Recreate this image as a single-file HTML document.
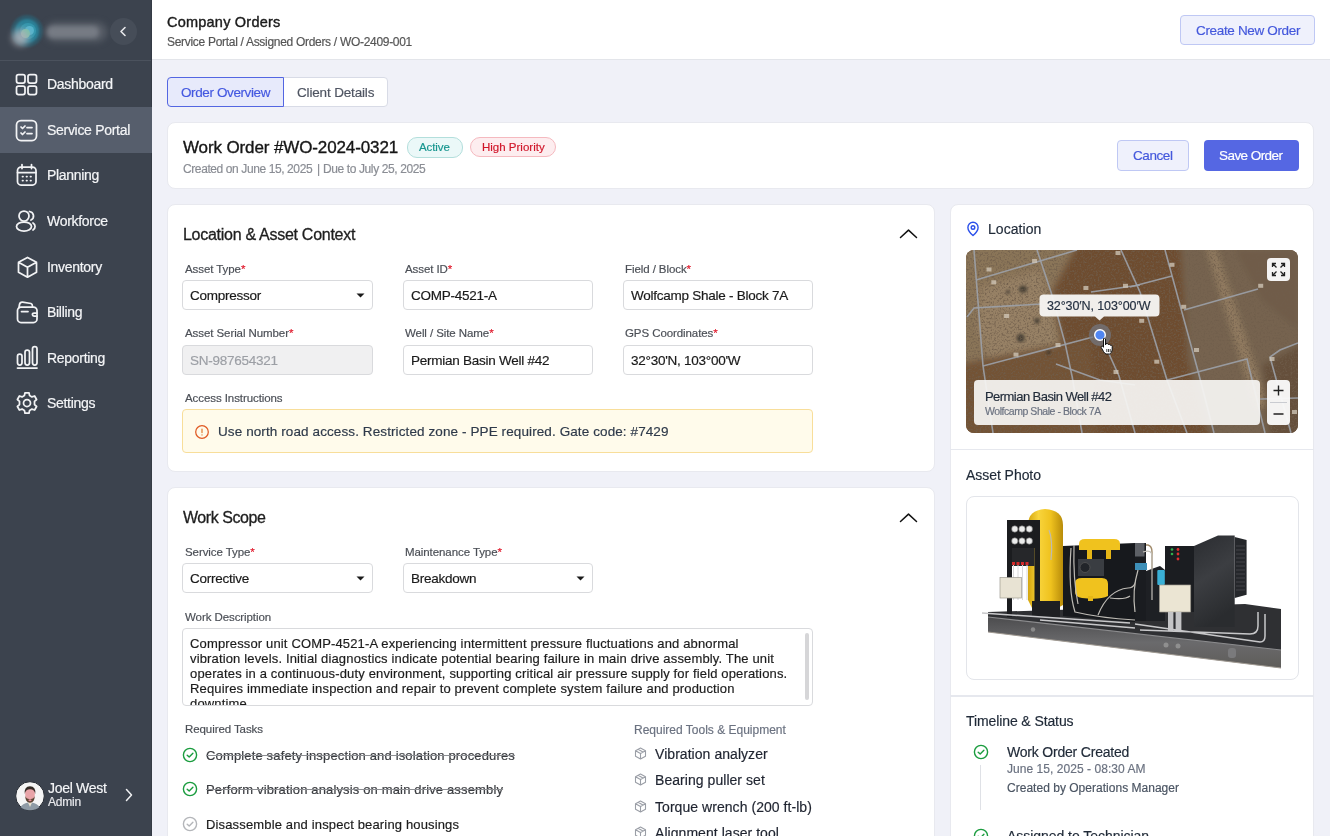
<!DOCTYPE html>
<html><head><meta charset="utf-8"><title>Company Orders</title>
<style>
html,body{margin:0;padding:0;}
body{width:1331px;height:836px;position:relative;overflow:hidden;background:#f0f1f8;font-family:"Liberation Sans", sans-serif;}
.t{position:absolute;white-space:nowrap;will-change:transform;-webkit-text-stroke:0.18px currentColor;}
.r{position:absolute;}
svg.r{overflow:visible;}
</style></head><body>
<div class="r" style="left:0px;top:0px;width:152px;height:836px;background:#3c434e;"></div>
<div class="r" style="left:0px;top:60px;width:152px;height:1px;background:#4b525d;"></div>
<div class="r" style="left:151px;top:0px;width:1px;height:836px;background:#353b45;"></div>
<div class="r" style="left:11px;top:14.5px;width:32px;height:32px;border-radius:50%;background:#30596a;filter:blur(1.2px);"></div>
<div class="r" style="left:15px;top:18.5px;width:24px;height:24px;border-radius:50%;background:#2b8097;filter:blur(0.8px);"></div>
<div class="r" style="left:19.5px;top:22.5px;width:16px;height:16px;border-radius:50%;background:#3596ad;filter:blur(0.6px);"></div>
<div class="r" style="left:24.5px;top:25.5px;width:9px;height:9px;border-radius:50%;background:#56b3cb;filter:blur(0.6px);"></div>
<div class="r" style="left:21px;top:28.5px;width:9px;height:9px;border-radius:50%;background:#74c1a9;filter:blur(0.6px);"></div>
<div class="r" style="left:12px;top:29px;width:17px;height:17px;border-radius:50%;background:#aeb0b7;filter:blur(3px);opacity:.85"></div>
<div class="r" style="left:45px;top:22px;width:62px;height:20px;border-radius:10px;background:#575d67;filter:blur(3px);"></div>
<div class="r" style="left:47px;top:26px;width:52px;height:12px;border-radius:6px;background:#767b84;filter:blur(2px);"></div>
<div class="r" style="left:110px;top:18px;width:27px;height:27px;border-radius:50%;background:#464d58;"></div>
<svg class="r" style="left:117px;top:25px" width="13" height="13" viewBox="0 0 13 13"><path d="M8 2.5 L4 6.5 L8 10.5" fill="none" stroke="#e8e9ec" stroke-width="1.6" stroke-linecap="round" stroke-linejoin="round"/></svg>
<div class="r" style="left:0px;top:107px;width:152px;height:46px;background:#565e6c;"></div>
<div class="t " style="left:47px;top:77.15px;font-size:14px;line-height:14px;color:#f4f5f7;font-weight:400;letter-spacing:-0.3px;-webkit-text-stroke:0.2px #f4f5f7;">Dashboard</div>
<div class="t " style="left:47px;top:123.15px;font-size:14px;line-height:14px;color:#f4f5f7;font-weight:400;letter-spacing:-0.3px;-webkit-text-stroke:0.2px #f4f5f7;">Service Portal</div>
<div class="t " style="left:47px;top:168.15px;font-size:14px;line-height:14px;color:#f4f5f7;font-weight:400;letter-spacing:-0.3px;-webkit-text-stroke:0.2px #f4f5f7;">Planning</div>
<div class="t " style="left:47px;top:214.15px;font-size:14px;line-height:14px;color:#f4f5f7;font-weight:400;letter-spacing:-0.3px;-webkit-text-stroke:0.2px #f4f5f7;">Workforce</div>
<div class="t " style="left:47px;top:260.15px;font-size:14px;line-height:14px;color:#f4f5f7;font-weight:400;letter-spacing:-0.3px;-webkit-text-stroke:0.2px #f4f5f7;">Inventory</div>
<div class="t " style="left:47px;top:305.15px;font-size:14px;line-height:14px;color:#f4f5f7;font-weight:400;letter-spacing:-0.3px;-webkit-text-stroke:0.2px #f4f5f7;">Billing</div>
<div class="t " style="left:47px;top:351.15px;font-size:14px;line-height:14px;color:#f4f5f7;font-weight:400;letter-spacing:-0.3px;-webkit-text-stroke:0.2px #f4f5f7;">Reporting</div>
<div class="t " style="left:47px;top:396.15px;font-size:14px;line-height:14px;color:#f4f5f7;font-weight:400;letter-spacing:-0.3px;-webkit-text-stroke:0.2px #f4f5f7;">Settings</div>
<svg class="r" style="left:15px;top:73px" width="24" height="23" viewBox="0 0 24 23"><rect x="1.5" y="1.5" width="8.5" height="8.5" rx="2" fill="none" stroke="#f2f3f5" stroke-width="1.75" stroke-linecap="round" stroke-linejoin="round"/><rect x="13" y="1.5" width="8.5" height="8.5" rx="2" fill="none" stroke="#f2f3f5" stroke-width="1.75" stroke-linecap="round" stroke-linejoin="round"/><rect x="1.5" y="13" width="8.5" height="8.5" rx="2" fill="none" stroke="#f2f3f5" stroke-width="1.75" stroke-linecap="round" stroke-linejoin="round"/><rect x="13" y="13" width="8.5" height="8.5" rx="2" fill="none" stroke="#f2f3f5" stroke-width="1.75" stroke-linecap="round" stroke-linejoin="round"/></svg>
<svg class="r" style="left:15px;top:119px" width="23" height="23" viewBox="0 0 23 23"><rect x="1.5" y="1.5" width="20" height="20" rx="4.5" fill="none" stroke="#f2f3f5" stroke-width="1.75" stroke-linecap="round" stroke-linejoin="round"/><path d="M6 8 L7.5 9.5 L10 7 M6 14 L7.5 15.5 L10 13 M12 8.5 H17 M12 14.5 H17" fill="none" stroke="#f2f3f5" stroke-width="1.75" stroke-linecap="round" stroke-linejoin="round"/></svg>
<svg class="r" style="left:16px;top:163px" width="22" height="24" viewBox="0 0 22 24"><rect x="1.5" y="4" width="18.5" height="18" rx="3.5" fill="none" stroke="#f2f3f5" stroke-width="1.75" stroke-linecap="round" stroke-linejoin="round"/><path d="M1.5 9.5 H20 M6 1.5 V5.5 M15.5 1.5 V5.5" fill="none" stroke="#f2f3f5" stroke-width="1.75" stroke-linecap="round" stroke-linejoin="round"/><path d="M6.5 13.5h.5M10.5 13.5h.5M14.5 13.5h.5M6.5 17.5h.5M10.5 17.5h.5M14.5 17.5h.5" fill="none" stroke="#f2f3f5" stroke-width="1.75" stroke-linecap="round" stroke-linejoin="round"/></svg>
<svg class="r" style="left:15px;top:209px" width="24" height="24" viewBox="0 0 24 24"><circle cx="9" cy="7" r="5" fill="none" stroke="#f2f3f5" stroke-width="1.75" stroke-linecap="round" stroke-linejoin="round"/><ellipse cx="9" cy="17.5" rx="7.5" ry="4.5" fill="none" stroke="#f2f3f5" stroke-width="1.75" stroke-linecap="round" stroke-linejoin="round"/><path d="M14.5 2.5 A4.5 4.5 0 0 1 16 11 M18 14 A4 4 0 0 1 18 21" fill="none" stroke="#f2f3f5" stroke-width="1.75" stroke-linecap="round" stroke-linejoin="round"/></svg>
<svg class="r" style="left:16px;top:255.5px" width="23" height="24" viewBox="0 0 23 24"><path d="M11.5 1.5 L20.5 6.3 V16.2 L11.5 21.2 L2.5 16.2 V6.3 Z M2.5 6.3 L11.5 11.3 L20.5 6.3 M11.5 11.3 V21.2" fill="none" stroke="#f2f3f5" stroke-width="1.75" stroke-linecap="round" stroke-linejoin="round"/></svg>
<svg class="r" style="left:16px;top:300px" width="23" height="24" viewBox="0 0 23 24"><rect x="1.5" y="7" width="19.5" height="15.5" rx="3.5" fill="none" stroke="#f2f3f5" stroke-width="1.75" stroke-linecap="round" stroke-linejoin="round"/><path d="M3 7.5 L3.5 4.5 Q4 2 6.5 2.2 L15 3.5 Q16.5 4 16.5 6.5 V7 M5.5 11.5 H12 M21 13 H18 A1.6 1.6 0 0 0 18 16.2 H21" fill="none" stroke="#f2f3f5" stroke-width="1.75" stroke-linecap="round" stroke-linejoin="round"/></svg>
<svg class="r" style="left:16px;top:345px" width="23" height="24" viewBox="0 0 23 24"><rect x="1.5" y="9" width="4.5" height="11" rx="2.2" fill="none" stroke="#f2f3f5" stroke-width="1.75" stroke-linecap="round" stroke-linejoin="round"/><rect x="9" y="5" width="4.5" height="15" rx="2.2" fill="none" stroke="#f2f3f5" stroke-width="1.75" stroke-linecap="round" stroke-linejoin="round"/><rect x="16.5" y="1.5" width="4.5" height="18.5" rx="2.2" fill="none" stroke="#f2f3f5" stroke-width="1.75" stroke-linecap="round" stroke-linejoin="round"/><path d="M1.5 23 H21" fill="none" stroke="#f2f3f5" stroke-width="1.75" stroke-linecap="round" stroke-linejoin="round"/></svg>
<svg class="r" style="left:15px;top:391px" width="24" height="24" viewBox="0 0 24 24"><circle cx="12" cy="12" r="3.5" fill="none" stroke="#f2f3f5" stroke-width="1.75" stroke-linecap="round" stroke-linejoin="round"/><path d="M10 1.8 H14 L14.6 4.6 L16.9 5.9 L19.6 5 L21.6 8.5 L19.5 10.4 V13.6 L21.6 15.5 L19.6 19 L16.9 18.1 L14.6 19.4 L14 22.2 H10 L9.4 19.4 L7.1 18.1 L4.4 19 L2.4 15.5 L4.5 13.6 V10.4 L2.4 8.5 L4.4 5 L7.1 5.9 L9.4 4.6 Z" fill="none" stroke="#f2f3f5" stroke-width="1.75" stroke-linecap="round" stroke-linejoin="round"/></svg>
<svg class="r" style="left:14.5px;top:780.5px" width="30" height="30" viewBox="0 0 30 30"><circle cx="15" cy="15" r="14.3" fill="#f5f5f5" stroke="#262b33" stroke-width="1"/><path d="M5.5 26 Q7.5 22.5 13 21.5 L15 24 L17 21.5 Q22.5 22.5 24.5 26 Q20.5 29.3 15 29.3 Q9.5 29.3 5.5 26Z" fill="#8f9ba6"/><path d="M13 21.5 L15 26 L17 21.5 Z" fill="#e9e2cf"/><path d="M10 10 Q10 21.5 15 21.5 Q20 21.5 20 10 Q20 7 15 7 Q10 7 10 10Z" fill="#e8a4a8"/><path d="M9.8 13 Q9 5.3 15 5.3 Q21 5.3 20.2 13 Q19.8 8.2 15 8.2 Q10.2 8.2 9.8 13Z" fill="#332a24"/><path d="M10.2 15 Q10.5 21.8 15 21.8 Q19.5 21.8 19.8 15 Q18.5 18.5 15 18 Q11.5 18.5 10.2 15Z" fill="#5b4433"/><ellipse cx="15" cy="19.3" rx="1.6" ry="1" fill="#e58c98"/></svg>
<div class="t " style="left:48px;top:781.15px;font-size:14px;line-height:14px;color:#f4f5f7;font-weight:400;letter-spacing:-0.3px;">Joel West</div>
<div class="t " style="left:48px;top:795.84px;font-size:12px;line-height:12px;color:#e8e9ec;font-weight:400;letter-spacing:-0.2px;">Admin</div>
<svg class="r" style="left:124px;top:788px" width="10" height="14" viewBox="0 0 10 14"><path d="M2.5 1.5 L7.5 7 L2.5 12.5" fill="none" stroke="#f0f1f3" stroke-width="1.5" stroke-linecap="round" stroke-linejoin="round"/></svg>
<div class="r" style="left:152px;top:0px;width:1179px;height:60px;background:#fff;border-bottom:1px solid #e3e5ea;box-sizing:border-box;"></div>
<div class="r" style="left:152px;top:60px;width:1179px;height:776px;background:#f0f1f8;"></div>
<div class="r" style="left:1330px;top:0px;width:1px;height:836px;background:#fff;"></div>
<div class="t " style="left:167px;top:14.73px;font-size:14.5px;line-height:14.5px;color:#1b1b1b;font-weight:400;letter-spacing:0.22px;-webkit-text-stroke:0.4px #1b1b1b;">Company Orders</div>
<div class="t " style="left:167px;top:36.34px;font-size:12px;line-height:12px;color:#555;font-weight:400;letter-spacing:-0.3px;">Service Portal / Assigned Orders / WO-2409-001</div>
<div class="r" style="left:1180px;top:15px;width:135px;height:30px;background:#eff1fc;border:1px solid #bfc8f4;border-radius:4px;box-sizing:border-box;"></div>
<div class="t " style="left:1195.5px;top:24.07px;font-size:13.5px;line-height:13.5px;color:#4458dc;font-weight:400;letter-spacing:-0.34px;">Create New Order</div>
<div class="r" style="left:167px;top:77px;width:221px;height:30px;background:#fff;border:1px solid #d8dbe6;border-radius:4px;box-sizing:border-box;"></div>
<div class="r" style="left:167px;top:77px;width:117px;height:30px;background:#e7eafb;border:1px solid #5366e2;border-radius:4px 0 0 4px;box-sizing:border-box;"></div>
<div class="t " style="left:180.9px;top:85.57px;font-size:13.5px;line-height:13.5px;color:#4458e0;font-weight:400;letter-spacing:-0.39px;">Order Overview</div>
<div class="t " style="left:296.7px;top:85.57px;font-size:13.5px;line-height:13.5px;color:#4f5562;font-weight:400;letter-spacing:-0.16px;">Client Details</div>
<div class="r" style="left:167px;top:122px;width:1147px;height:67px;background:#fff;border-radius:8px;border:1px solid #e8e9ef;box-sizing:border-box;"></div>
<div class="t " style="left:182.5px;top:138.61px;font-size:17px;line-height:17px;color:#161616;font-weight:400;letter-spacing:-0.12px;-webkit-text-stroke:0.35px #161616;">Work Order #WO-2024-0321</div>
<div class="r" style="left:407px;top:137px;width:56px;height:21px;background:#ebf8f8;border:1px solid #b3dfdc;border-radius:10px;box-sizing:border-box;"></div>
<div class="t " style="left:419.2px;top:141.57px;font-size:11.5px;line-height:11.5px;color:#17968f;font-weight:400;letter-spacing:-0.1px;">Active</div>
<div class="r" style="left:470px;top:137px;width:86px;height:20px;background:#fdedef;border:1px solid #f5b9bf;border-radius:10px;box-sizing:border-box;"></div>
<div class="t " style="left:482.4px;top:141.57px;font-size:11.5px;line-height:11.5px;color:#d0162a;font-weight:400;letter-spacing:0px;">High Priority</div>
<div class="t " style="left:182.5px;top:162.84px;font-size:12px;line-height:12px;color:#8a8d94;font-weight:400;letter-spacing:-0.4px;">Created on June 15, 2025</div>
<div class="t " style="left:316.5px;top:162.84px;font-size:12px;line-height:12px;color:#8a8d94;font-weight:400;">|</div>
<div class="t " style="left:323.4px;top:162.84px;font-size:12px;line-height:12px;color:#8a8d94;font-weight:400;letter-spacing:-0.39px;">Due to July 25, 2025</div>
<div class="r" style="left:1117px;top:140px;width:72px;height:31px;background:#eff1fc;border:1px solid #bfc8f4;border-radius:4px;box-sizing:border-box;"></div>
<div class="t " style="left:1132.8px;top:149.17px;font-size:13.5px;line-height:13.5px;color:#4458dc;font-weight:400;letter-spacing:-0.42px;">Cancel</div>
<div class="r" style="left:1204px;top:140px;width:95px;height:31px;background:#5567e3;border-radius:4px;"></div>
<div class="t " style="left:1219.4px;top:149.17px;font-size:13.5px;line-height:13.5px;color:#ffffff;font-weight:400;letter-spacing:-0.56px;">Save Order</div>
<div class="r" style="left:167px;top:204px;width:768px;height:268px;background:#fff;border-radius:8px;border:1px solid #e8e9ef;box-sizing:border-box;"></div>
<div class="t " style="left:182.5px;top:226.96px;font-size:16px;line-height:16px;color:#1e1e1e;font-weight:400;letter-spacing:-0.28px;-webkit-text-stroke:0.3px #1e1e1e;">Location &amp; Asset Context</div>
<svg class="r" style="left:898px;top:227px" width="22" height="14" viewBox="0 0 22 14"><path d="M2.5 10.5 L10.5 3.1 L18.5 10.5" fill="none" stroke="#111" stroke-width="1.5" stroke-linecap="round" stroke-linejoin="round"/></svg>
<div class="t " style="left:184.5px;top:263.77px;font-size:11.5px;line-height:11.5px;color:#4b4f56;font-weight:400;letter-spacing:-0.08px;">Asset Type<span style="color:#e01a2c">*</span></div>
<div class="t " style="left:404.5px;top:263.77px;font-size:11.5px;line-height:11.5px;color:#4b4f56;font-weight:400;letter-spacing:-0.08px;">Asset ID<span style="color:#e01a2c">*</span></div>
<div class="t " style="left:625px;top:263.77px;font-size:11.5px;line-height:11.5px;color:#4b4f56;font-weight:400;letter-spacing:-0.08px;">Field / Block<span style="color:#e01a2c">*</span></div>
<div class="r" style="left:182px;top:280px;width:191px;height:30px;background:#fff;border:1px solid #d9dadd;border-radius:4px;box-sizing:border-box;"></div>
<div class="t " style="left:190px;top:288.97px;font-size:13.5px;line-height:13.5px;color:#1a1a1a;font-weight:400;letter-spacing:-0.25px;">Compressor</div>
<svg class="r" style="left:355.5px;top:293px" width="9" height="5" viewBox="0 0 9 5"><path d="M0.5 0.5 H8.5 L4.5 4.6 Z" fill="#1a1a1a"/></svg>
<div class="r" style="left:403px;top:280px;width:190px;height:30px;background:#fff;border:1px solid #d9dadd;border-radius:4px;box-sizing:border-box;"></div>
<div class="t " style="left:411px;top:288.97px;font-size:13.5px;line-height:13.5px;color:#1a1a1a;font-weight:400;letter-spacing:-0.25px;">COMP-4521-A</div>
<div class="r" style="left:623px;top:280px;width:190px;height:30px;background:#fff;border:1px solid #d9dadd;border-radius:4px;box-sizing:border-box;"></div>
<div class="t " style="left:631px;top:288.97px;font-size:13.5px;line-height:13.5px;color:#1a1a1a;font-weight:400;letter-spacing:-0.25px;">Wolfcamp Shale - Block 7A</div>
<div class="t " style="left:184.5px;top:328.27px;font-size:11.5px;line-height:11.5px;color:#4b4f56;font-weight:400;letter-spacing:-0.08px;">Asset Serial Number<span style="color:#e01a2c">*</span></div>
<div class="t " style="left:404.5px;top:328.27px;font-size:11.5px;line-height:11.5px;color:#4b4f56;font-weight:400;letter-spacing:-0.08px;">Well / Site Name<span style="color:#e01a2c">*</span></div>
<div class="t " style="left:625px;top:328.27px;font-size:11.5px;line-height:11.5px;color:#4b4f56;font-weight:400;letter-spacing:-0.08px;">GPS Coordinates<span style="color:#e01a2c">*</span></div>
<div class="r" style="left:182px;top:345px;width:191px;height:30px;background:#f0f0f1;border:1px solid #d9dadd;border-radius:4px;box-sizing:border-box;"></div>
<div class="t " style="left:190px;top:353.97px;font-size:13.5px;line-height:13.5px;color:#9c9fa5;font-weight:400;letter-spacing:-0.25px;">SN-987654321</div>
<div class="r" style="left:403px;top:345px;width:190px;height:30px;background:#fff;border:1px solid #d9dadd;border-radius:4px;box-sizing:border-box;"></div>
<div class="t " style="left:411px;top:353.97px;font-size:13.5px;line-height:13.5px;color:#1a1a1a;font-weight:400;letter-spacing:-0.25px;">Permian Basin Well #42</div>
<div class="r" style="left:623px;top:345px;width:190px;height:30px;background:#fff;border:1px solid #d9dadd;border-radius:4px;box-sizing:border-box;"></div>
<div class="t " style="left:631px;top:353.97px;font-size:13.5px;line-height:13.5px;color:#1a1a1a;font-weight:400;letter-spacing:-0.25px;">32°30'N, 103°00'W</div>
<div class="t " style="left:184.5px;top:393.27px;font-size:11.5px;line-height:11.5px;color:#4b4f56;font-weight:400;letter-spacing:-0.08px;">Access Instructions</div>
<div class="r" style="left:182px;top:409px;width:631px;height:44px;background:#fffbeb;border:1px solid #f8de9a;border-radius:4px;box-sizing:border-box;"></div>
<svg class="r" style="left:194px;top:424px" width="16" height="16" viewBox="0 0 16 16"><circle cx="8" cy="8" r="6.3" fill="none" stroke="#e05a24" stroke-width="1.25"/><path d="M8 5 V8.6" stroke="#e0782a" stroke-width="1.2" stroke-linecap="round"/><circle cx="8" cy="10.9" r="0.7" fill="#e0782a"/></svg>
<div class="t " style="left:218px;top:424.97px;font-size:13.5px;line-height:13.5px;color:#2f3a4a;font-weight:400;letter-spacing:0.1px;">Use north road access. Restricted zone - PPE required. Gate code: #7429</div>
<div class="r" style="left:167px;top:487px;width:768px;height:360px;background:#fff;border-radius:8px;border:1px solid #e8e9ef;box-sizing:border-box;"></div>
<div class="t " style="left:182.5px;top:509.96px;font-size:16px;line-height:16px;color:#1e1e1e;font-weight:400;letter-spacing:-0.45px;-webkit-text-stroke:0.3px #1e1e1e;">Work Scope</div>
<svg class="r" style="left:898px;top:510.5px" width="22" height="14" viewBox="0 0 22 14"><path d="M2.5 10.5 L10.5 3.1 L18.5 10.5" fill="none" stroke="#111" stroke-width="1.5" stroke-linecap="round" stroke-linejoin="round"/></svg>
<div class="t " style="left:184.5px;top:547.27px;font-size:11.5px;line-height:11.5px;color:#4b4f56;font-weight:400;letter-spacing:-0.08px;">Service Type<span style="color:#e01a2c">*</span></div>
<div class="t " style="left:404.5px;top:547.27px;font-size:11.5px;line-height:11.5px;color:#4b4f56;font-weight:400;letter-spacing:-0.08px;">Maintenance Type<span style="color:#e01a2c">*</span></div>
<div class="r" style="left:182px;top:563px;width:191px;height:30px;background:#fff;border:1px solid #d9dadd;border-radius:4px;box-sizing:border-box;"></div>
<div class="t " style="left:190px;top:571.97px;font-size:13.5px;line-height:13.5px;color:#1a1a1a;font-weight:400;letter-spacing:-0.25px;">Corrective</div>
<svg class="r" style="left:355.5px;top:576px" width="9" height="5" viewBox="0 0 9 5"><path d="M0.5 0.5 H8.5 L4.5 4.6 Z" fill="#1a1a1a"/></svg>
<div class="r" style="left:403px;top:563px;width:190px;height:30px;background:#fff;border:1px solid #d9dadd;border-radius:4px;box-sizing:border-box;"></div>
<div class="t " style="left:411px;top:571.97px;font-size:13.5px;line-height:13.5px;color:#1a1a1a;font-weight:400;letter-spacing:-0.25px;">Breakdown</div>
<svg class="r" style="left:575.5px;top:576px" width="9" height="5" viewBox="0 0 9 5"><path d="M0.5 0.5 H8.5 L4.5 4.6 Z" fill="#1a1a1a"/></svg>
<div class="t " style="left:184.5px;top:611.77px;font-size:11.5px;line-height:11.5px;color:#4b4f56;font-weight:400;letter-spacing:-0.08px;">Work Description</div>
<div class="r" style="left:182px;top:628px;width:631px;height:78px;background:#fff;border:1px solid #d9dadd;border-radius:4px;box-sizing:border-box;overflow:hidden;"></div>
<div class="r" style="left:183px;top:629px;width:629px;height:76px;overflow:hidden;"><div class="t" style="left:7px;top:8.00px;font-size:13px;line-height:13px;color:#1c1c1c;letter-spacing:0.15px">Compressor unit COMP-4521-A experiencing intermittent pressure fluctuations and abnormal</div><div class="t" style="left:7px;top:23.00px;font-size:13px;line-height:13px;color:#1c1c1c;letter-spacing:0.15px">vibration levels. Initial diagnostics indicate potential bearing failure in main drive assembly. The unit</div><div class="t" style="left:7px;top:38.00px;font-size:13px;line-height:13px;color:#1c1c1c;letter-spacing:0.15px">operates in a continuous-duty environment, supporting critical air pressure supply for field operations.</div><div class="t" style="left:7px;top:53.00px;font-size:13px;line-height:13px;color:#1c1c1c;letter-spacing:0.15px">Requires immediate inspection and repair to prevent complete system failure and production</div><div class="t" style="left:7px;top:68.00px;font-size:13px;line-height:13px;color:#1c1c1c;letter-spacing:0.15px">downtime.</div></div>
<div class="r" style="left:805px;top:633px;width:3.6px;height:67px;background:#d6d6d8;border-radius:2px;"></div>
<div class="t " style="left:184.5px;top:724.27px;font-size:11.5px;line-height:11.5px;color:#4b4f56;font-weight:400;letter-spacing:-0.08px;">Required Tasks</div>
<svg class="r" style="left:182px;top:747px" width="16" height="16" viewBox="0 0 16 16"><circle cx="8" cy="8" r="6.6" fill="none" stroke="#1a9c3e" stroke-width="1.4"/><path d="M5.2 8.2 L7.2 10.1 L10.9 6.3" fill="none" stroke="#1a9c3e" stroke-width="1.4" stroke-linecap="round" stroke-linejoin="round"/></svg>
<div class="t " style="left:205.5px;top:749.00px;font-size:13px;line-height:13px;color:#3a3c40;font-weight:400;letter-spacing:0.15px;text-decoration:line-through;text-decoration-color:#8d8f93;">Complete safety inspection and isolation procedures</div>
<svg class="r" style="left:182px;top:781.3px" width="16" height="16" viewBox="0 0 16 16"><circle cx="8" cy="8" r="6.6" fill="none" stroke="#1a9c3e" stroke-width="1.4"/><path d="M5.2 8.2 L7.2 10.1 L10.9 6.3" fill="none" stroke="#1a9c3e" stroke-width="1.4" stroke-linecap="round" stroke-linejoin="round"/></svg>
<div class="t " style="left:205.5px;top:783.30px;font-size:13px;line-height:13px;color:#3a3c40;font-weight:400;letter-spacing:0.15px;text-decoration:line-through;text-decoration-color:#8d8f93;">Perform vibration analysis on main drive assembly</div>
<svg class="r" style="left:182px;top:815.5px" width="16" height="16" viewBox="0 0 16 16"><circle cx="8" cy="8" r="6.6" fill="none" stroke="#b4b6ba" stroke-width="1.4"/><path d="M5.2 8.2 L7.2 10.1 L10.9 6.3" fill="none" stroke="#b4b6ba" stroke-width="1.4" stroke-linecap="round" stroke-linejoin="round"/></svg>
<div class="t " style="left:205.5px;top:817.50px;font-size:13px;line-height:13px;color:#1c1c1c;font-weight:400;letter-spacing:0.15px;">Disassemble and inspect bearing housings</div>
<div class="t " style="left:634px;top:723.64px;font-size:12px;line-height:12px;color:#6b7280;font-weight:400;letter-spacing:0px;">Required Tools &amp; Equipment</div>
<svg class="r" style="left:634px;top:746.8px" width="13" height="13" viewBox="0 0 13 13"><path d="M6.5 1 L11.5 3.7 V9.3 L6.5 12 L1.5 9.3 V3.7 Z M1.5 3.7 L6.5 6.4 L11.5 3.7 M6.5 6.4 V12 M4 2.35 L9 5" fill="none" stroke="#9a9ea6" stroke-width="1.1" stroke-linejoin="round"/></svg>
<div class="t " style="left:655px;top:746.85px;font-size:14px;line-height:14px;color:#1f2430;font-weight:400;letter-spacing:0.05px;">Vibration analyzer</div>
<svg class="r" style="left:634px;top:773.2px" width="13" height="13" viewBox="0 0 13 13"><path d="M6.5 1 L11.5 3.7 V9.3 L6.5 12 L1.5 9.3 V3.7 Z M1.5 3.7 L6.5 6.4 L11.5 3.7 M6.5 6.4 V12 M4 2.35 L9 5" fill="none" stroke="#9a9ea6" stroke-width="1.1" stroke-linejoin="round"/></svg>
<div class="t " style="left:655px;top:773.25px;font-size:14px;line-height:14px;color:#1f2430;font-weight:400;letter-spacing:0.05px;">Bearing puller set</div>
<svg class="r" style="left:634px;top:799.6px" width="13" height="13" viewBox="0 0 13 13"><path d="M6.5 1 L11.5 3.7 V9.3 L6.5 12 L1.5 9.3 V3.7 Z M1.5 3.7 L6.5 6.4 L11.5 3.7 M6.5 6.4 V12 M4 2.35 L9 5" fill="none" stroke="#9a9ea6" stroke-width="1.1" stroke-linejoin="round"/></svg>
<div class="t " style="left:655px;top:799.65px;font-size:14px;line-height:14px;color:#1f2430;font-weight:400;letter-spacing:0.05px;">Torque wrench (200 ft-lb)</div>
<svg class="r" style="left:634px;top:826.0px" width="13" height="13" viewBox="0 0 13 13"><path d="M6.5 1 L11.5 3.7 V9.3 L6.5 12 L1.5 9.3 V3.7 Z M1.5 3.7 L6.5 6.4 L11.5 3.7 M6.5 6.4 V12 M4 2.35 L9 5" fill="none" stroke="#9a9ea6" stroke-width="1.1" stroke-linejoin="round"/></svg>
<div class="t " style="left:655px;top:826.05px;font-size:14px;line-height:14px;color:#1f2430;font-weight:400;letter-spacing:0.05px;">Alignment laser tool</div>
<div class="r" style="left:950px;top:204px;width:364px;height:700px;background:#fff;border-radius:8px;border:1px solid #e8e9ef;box-sizing:border-box;"></div>
<svg class="r" style="left:965px;top:221px" width="16" height="17" viewBox="0 0 16 17"><path d="M8 14.6 C8 14.6 2.9 10 2.9 6.4 A5.1 5.1 0 0 1 13.1 6.4 C13.1 10 8 14.6 8 14.6 Z" fill="none" stroke="#2b50ea" stroke-width="1.4" stroke-linejoin="round"/><circle cx="8" cy="6.5" r="1.8" fill="none" stroke="#2b50ea" stroke-width="1.4"/></svg>
<div class="t " style="left:988.2px;top:222.35px;font-size:14px;line-height:14px;color:#1f2937;font-weight:400;letter-spacing:0.05px;">Location</div>
<svg class="r" style="left:966px;top:250px;overflow:hidden;border-radius:8px" width="332" height="183" viewBox="966 250 332 183"><defs><filter id="nz" x="0" y="0" width="100%" height="100%"><feTurbulence type="fractalNoise" baseFrequency="0.55" numOctaves="2" seed="5"/><feColorMatrix type="matrix" values="0 0 0 0 0.16  0 0 0 0 0.11  0 0 0 0 0.07  0 0 0 2.6 -1.2"/></filter><filter id="bl" x="-20%" y="-20%" width="140%" height="140%"><feGaussianBlur stdDeviation="3"/></filter><filter id="bl2"><feGaussianBlur stdDeviation="1.5"/></filter></defs><rect x="966" y="250" width="332" height="183" fill="#6e4c2f"/><g filter="url(#bl)"><path d="M950 240 L1080 240 L1052 292 L1062 340 L1050 366 L985 374 L950 360 Z" fill="#8a7459"/><path d="M980 288 L1040 270 L1050 300 L1058 342 L1040 360 L992 366 L978 330 Z" fill="#978165"/><path d="M950 366 L1090 338 L1100 445 L950 445 Z" fill="#735234"/><path d="M1180 240 L1310 240 L1310 445 L1212 445 L1188 360 Z" fill="#76644f"/><path d="M1206 248 L1216 248 L1268 405 L1256 410 Z" fill="#927c60"/><path d="M1262 365 L1310 340 L1310 445 L1270 445 Z" fill="#654f3a"/><path d="M1235 250 L1298 250 L1298 330 L1262 300 Z" fill="#6f5c48"/></g><g fill="#35302a" filter="url(#bl2)" opacity="0.85"><ellipse cx="1023" cy="289.3" rx="4" ry="3.5"/><ellipse cx="1020.6" cy="338" rx="4" ry="4"/><ellipse cx="1037" cy="320.8" rx="2.5" ry="3"/><ellipse cx="1048.6" cy="352.3" rx="2" ry="2.5"/><ellipse cx="1008" cy="292" rx="2" ry="2"/></g><rect x="966" y="250" width="332" height="183" filter="url(#nz)"/><polyline points="974,250 983,366 993,433" fill="none" stroke="#9ca1a8" stroke-width="1.6" opacity="0.9"/><polyline points="1037,250 1051,292 1065,343 1072,376 1082,433" fill="none" stroke="#9ca1a8" stroke-width="1.6" opacity="0.9"/><polyline points="976,280 1077,250" fill="none" stroke="#9ca1a8" stroke-width="1.6" opacity="0.9"/><polyline points="967,317 974,308 1042,304" fill="none" stroke="#9ca1a8" stroke-width="1.6" opacity="0.9"/><polyline points="983,366 1093,337" fill="none" stroke="#9ca1a8" stroke-width="1.6" opacity="0.9"/><polyline points="1121,250 1140,292 1167,380 1187,433" fill="none" stroke="#9ca1a8" stroke-width="1.6" opacity="0.9"/><polyline points="1105,345 1119,376 1135,433" fill="none" stroke="#9ca1a8" stroke-width="1.6" opacity="0.9"/><polyline points="1056,364 1100,380 1135,385" fill="none" stroke="#9ca1a8" stroke-width="1.6" opacity="0.9"/><polyline points="1091,292 1140,285" fill="none" stroke="#9ca1a8" stroke-width="1.6" opacity="0.9"/><polyline points="1165,250 1198,371 1214,433" fill="none" stroke="#9ca1a8" stroke-width="1.6" opacity="0.9"/><polyline points="1130,287 1172,276" fill="none" stroke="#9ca1a8" stroke-width="1.6" opacity="0.9"/><polyline points="1184,310 1258,289" fill="none" stroke="#9ca1a8" stroke-width="1.6" opacity="0.9"/><polyline points="1167,380 1247,359 1265,433" fill="none" stroke="#9ca1a8" stroke-width="1.6" opacity="0.9"/><polyline points="1298,343 1280,350 1270,357 1291,433" fill="none" stroke="#9ca1a8" stroke-width="1.6" opacity="0.9"/><polyline points="1260,399 1298,398" fill="none" stroke="#9ca1a8" stroke-width="1.6" opacity="0.9"/><rect x="986.5" y="267.5" width="5" height="4" fill="#d3cabb" opacity="0.75"/><rect x="991.3" y="280.3" width="5" height="4" fill="#d3cabb" opacity="0.75"/><rect x="1004.1" y="314" width="5" height="4" fill="#d3cabb" opacity="0.75"/><rect x="1032.1" y="259" width="5" height="4" fill="#d3cabb" opacity="0.75"/><rect x="1083.4" y="286" width="5" height="4" fill="#d3cabb" opacity="0.75"/><rect x="1123.0" y="283.8" width="5" height="4" fill="#d3cabb" opacity="0.75"/><rect x="1055.5" y="343" width="5" height="4" fill="#d3cabb" opacity="0.75"/><rect x="1013.5" y="352.6" width="5" height="4" fill="#d3cabb" opacity="0.75"/><rect x="1113.5" y="370" width="5" height="4" fill="#d3cabb" opacity="0.75"/><rect x="1169.5" y="262.8" width="5" height="4" fill="#d3cabb" opacity="0.75"/><rect x="1258.2" y="283.8" width="5" height="4" fill="#d3cabb" opacity="0.75"/><rect x="1181.2" y="304.8" width="5" height="4" fill="#d3cabb" opacity="0.75"/><rect x="1139.2" y="318.8" width="5" height="4" fill="#d3cabb" opacity="0.75"/><rect x="1194.0" y="348" width="5" height="4" fill="#d3cabb" opacity="0.75"/><rect x="1154.3" y="359.7" width="5" height="4" fill="#d3cabb" opacity="0.75"/><rect x="1269.5" y="357" width="5" height="4" fill="#d3cabb" opacity="0.75"/><rect x="1292.0" y="410" width="5" height="4" fill="#d3cabb" opacity="0.75"/><rect x="1115.5" y="251" width="5" height="4" fill="#d3cabb" opacity="0.75"/></svg>
<div class="r" style="left:974px;top:380px;width:286px;height:45px;background:rgba(246,245,243,0.93);border-radius:4px;"></div>
<div class="t " style="left:985.4px;top:389.60px;font-size:13px;line-height:13px;color:#1f2937;font-weight:400;letter-spacing:-0.55px;">Permian Basin Well #42</div>
<div class="t " style="left:985.4px;top:406.31px;font-size:10.5px;line-height:10.5px;color:#6b7280;font-weight:400;letter-spacing:-0.45px;">Wolfcamp Shale - Block 7A</div>
<div class="r" style="left:1267px;top:380px;width:23px;height:45px;background:rgba(250,250,250,0.96);border-radius:4px;"></div>
<div class="r" style="left:1270px;top:402px;width:17px;height:1px;background:#c9cbd0;"></div>
<svg class="r" style="left:1272px;top:384px" width="13" height="37" viewBox="0 0 13 37"><path d="M6.5 1.5 V11.5 M1.5 6.5 H11.5 M1.5 30 H11.5" stroke="#222" stroke-width="1.4"/></svg>
<div class="r" style="left:1267px;top:258px;width:23px;height:23px;background:rgba(250,250,250,0.96);border-radius:4px;"></div>
<svg class="r" style="left:1271px;top:262px" width="15" height="15" viewBox="0 0 15 15"><path d="M1.5 5 V1.5 H5 M1.5 1.5 L5.5 5.5 M10 1.5 H13.5 V5 M13.5 1.5 L9.5 5.5 M1.5 10 V13.5 H5 M1.5 13.5 L5.5 9.5 M13.5 10 V13.5 H10 M13.5 13.5 L9.5 9.5" fill="none" stroke="#222" stroke-width="1.3"/></svg>
<svg class="r" style="left:1039px;top:294px" width="121" height="28" viewBox="0 0 121 28"><path d="M4 0.5 H116.5 A4 4 0 0 1 120.5 4.5 V18.5 A4 4 0 0 1 116.5 22.5 H65 L60.5 26.5 L56 22.5 H4 A4 4 0 0 1 0.5 18.5 V4.5 A4 4 0 0 1 4 0.5 Z" fill="rgba(246,245,243,0.96)"/></svg>
<div class="t " style="left:1047.3px;top:300.42px;font-size:12.5px;line-height:12.5px;color:#243040;font-weight:400;letter-spacing:-0.1px;">32°30′N, 103°00′W</div>
<svg class="r" style="left:1088px;top:323px" width="24" height="24" viewBox="0 0 24 24"><circle cx="12" cy="12" r="11" fill="rgba(115,120,130,0.7)"/><circle cx="12" cy="12" r="5.3" fill="#4f86f3" stroke="#fff" stroke-width="1.4"/></svg>
<svg class="r" style="left:1100px;top:337px" width="14" height="18" viewBox="0 0 14 18"><path d="M3.5 1.5 Q5 0.8 5.5 2 V8 L6 6.5 Q7.5 6 8 7 L8.3 7.5 Q9.8 7 10.2 8.2 Q11.8 7.8 12.2 9.2 V13 Q12 16 9.5 17 H6 Q4.5 16.5 3.5 14.5 L1.2 10.5 Q0.8 9.2 2.2 9 L3.5 10.2 Z" fill="#fff" stroke="#111" stroke-width="1"/><path d="M6.8 12 V15 M8.5 12 V15 M10.2 12 V15" stroke="#111" stroke-width="0.8"/></svg>
<div class="r" style="left:950px;top:449px;width:364px;height:1px;background:#e6e8ee;"></div>
<div class="t " style="left:966px;top:468.15px;font-size:14px;line-height:14px;color:#1f2937;font-weight:400;letter-spacing:-0.05px;">Asset Photo</div>
<div class="r" style="left:966px;top:496px;width:333px;height:184px;background:#fff;border:1px solid #e3e5ea;border-radius:8px;box-sizing:border-box;"></div>
<svg class="r" style="left:966px;top:496px" width="333" height="184" viewBox="966 496 333 184">
<defs>
<linearGradient id="tank" x1="0" x2="1"><stop offset="0" stop-color="#d4a50e"/><stop offset="0.3" stop-color="#f8d43c"/><stop offset="0.65" stop-color="#efc21e"/><stop offset="1" stop-color="#b88c0a"/></linearGradient>
<linearGradient id="beam" x1="0" y1="0" x2="0" y2="1"><stop offset="0" stop-color="#4c4c4e"/><stop offset="0.5" stop-color="#6a6a6c"/><stop offset="1" stop-color="#5e5c59"/></linearGradient>
<linearGradient id="cab" x1="0" y1="0" x2="0.3" y2="1"><stop offset="0" stop-color="#2a2c30"/><stop offset="0.5" stop-color="#3c3e42"/><stop offset="1" stop-color="#2a2c2f"/></linearGradient>
</defs>
<path d="M988 612 L1245 604 L1281 609 L1281 651 L988 618 Z" fill="#2f3033"/>
<path d="M988 617 L1281 650 L1281 668 L988 632 Z" fill="url(#beam)"/>
<path d="M988 617 L1281 650" stroke="#8c8c8e" stroke-width="1.2"/>
<path d="M988 632 L1281 668" stroke="#a09a92" stroke-width="1"/>
<path d="M1028 525 Q1028 510 1045 509 Q1063 510 1063 525 V605 Q1046 616 1033 610 L1028 600 Z" fill="url(#tank)"/>
<rect x="1007" y="520" width="33" height="28" fill="#1b1c1f"/>
<rect x="1007" y="520" width="5" height="97" fill="#1b1c1f"/>
<rect x="1034.5" y="520" width="5.5" height="97" fill="#1b1c1f"/>
<rect x="1012" y="548" width="22.5" height="18" fill="#26272a"/>
<g fill="#ececec" stroke="#666" stroke-width="0.6"><circle cx="1014.8" cy="529" r="3.2"/><circle cx="1022" cy="529" r="3.2"/><circle cx="1029.3" cy="529" r="3.2"/><circle cx="1014.8" cy="541" r="3.2"/><circle cx="1022" cy="541" r="3.2"/><circle cx="1029.3" cy="541" r="3.2"/></g>
<g fill="#d32a2a"><rect x="1012" y="562" width="3" height="3"/><rect x="1016.5" y="562" width="3" height="3"/><rect x="1021" y="562" width="3" height="3"/><rect x="1025.5" y="562" width="3" height="3"/></g>
<path d="M1013.5 565 V600 M1018 565 V600 M1022.5 565 V600 M1027 565 V600" stroke="#d8d8d8" stroke-width="1"/>
<rect x="1000" y="577.5" width="21.5" height="20.5" fill="#e8e3d3" stroke="#9d9a90" stroke-width="0.7"/>
<rect x="1032" y="601" width="28" height="16" fill="#1e1f22"/>
<path d="M1063 546 L1135 543 L1135 622 L1063 616 Z" fill="#17191d"/>
<rect x="1078" y="559" width="26" height="17" fill="#3a3d42"/>
<circle cx="1085" cy="567.5" r="5" fill="#22252a" stroke="#555" stroke-width="0.8"/>
<path d="M1079 544 Q1079 539 1085 539 H1114 Q1120 539 1120 544 V550 H1079 Z" fill="#f0c21e"/>
<rect x="1087" y="550" width="5" height="9" fill="#e6b616"/><rect x="1106" y="550" width="5" height="9" fill="#e6b616"/>
<path d="M1075 583 Q1075 578 1082 578 H1102 Q1108 578 1108 584 V596 Q1100 600 1082 598 Q1075 597 1075 592 Z" fill="#f0c21e"/>
<rect x="1088" y="596" width="5" height="5" fill="#e6b616"/>
<path d="M1071 548 Q1068 590 1075 612 Q1100 618 1135 620 M1074 545 Q1073 580 1078 604 M1049 530 Q1053 540 1051 560 M1110 598 Q1125 600 1130 596 M1098 615 Q1108 590 1128 588 Q1138 588 1136 570" stroke="#bdbab4" stroke-width="1.2" fill="none"/>
<path d="M1136 545 L1148 545 Q1152 546 1152 552 V595" stroke="#a08a6a" stroke-width="1.4" fill="none"/>
<rect x="1135" y="543" width="11" height="78" fill="#1a1c20"/><path d="M1146 571 L1160 566 L1165 570 L1165 621 L1146 621 Z" fill="#1e2024"/><rect x="1135" y="543" width="9.5" height="13.5" fill="#5d6066"/><rect x="1135" y="563" width="12" height="7" fill="#3d8fb8"/><path d="M1143 552 Q1152 549 1152 556 V600 M1138 570 Q1132 590 1135 612" stroke="#c2bfb8" stroke-width="1.2" fill="none"/>
<path d="M1165 546 L1196 546 L1196 612 L1165 612 Z" fill="#1b1d21"/>
<g><circle cx="1172" cy="549.5" r="1.3" fill="#2fb24c"/><circle cx="1172" cy="554" r="1.3" fill="#2fb24c"/><circle cx="1178" cy="549.5" r="1.4" fill="#e03030"/><circle cx="1178" cy="554" r="1.4" fill="#e03030"/><circle cx="1178" cy="559" r="1.4" fill="#e03030"/></g>
<rect x="1157.3" y="570" width="7.5" height="15" fill="#3ab0d6" rx="1"/>
<path d="M1159.5 585 L1190.6 585 L1190.6 612 L1159.5 612 Z" fill="#ebe5d3" stroke="#a09c90" stroke-width="0.7"/>
<rect x="1168" y="612" width="5.4" height="19" fill="#c4c4c6"/><rect x="1175.6" y="612" width="5.8" height="19" fill="#c4c4c6"/>
<path d="M1194 546 L1218 535.5 L1234.7 535.5 L1234.7 627 L1194 627 Z" fill="url(#cab)"/>
<path d="M1234.7 537 L1246.6 540 L1246.6 594.7 L1234.7 598 Z" fill="#25272b"/>
<g stroke="#4b4d52" stroke-width="0.8"><path d="M1236 546 H1245 M1236 550 H1245 M1236 554 H1245 M1236 558 H1245 M1236 562 H1245 M1236 566 H1245 M1236 570 H1245 M1236 574 H1245 M1236 578 H1245 M1236 582 H1245 M1236 586 H1245 M1236 590 H1245"/></g>
<path d="M982 613 L1130 623 M1135 624 L1260 642 Q1265 642 1265 636 V614 M1140 630 L1250 634 Q1258 634 1258 626 V612 M1040 620 L1135 628" stroke="#c8c8ca" stroke-width="1.5" fill="none"/>
<circle cx="1033" cy="629.5" r="2.2" fill="#8a8a8a"/><circle cx="1166" cy="645" r="2.5" fill="#8f8f8f"/><circle cx="1178" cy="646" r="2.5" fill="#8f8f8f"/>
<rect x="1228" y="648" width="8" height="10" rx="3" fill="#7a7a7c"/>
</svg>
<div class="r" style="left:950px;top:695px;width:364px;height:1.5px;background:#e6e8ee;"></div>
<div class="t " style="left:966px;top:714.15px;font-size:14px;line-height:14px;color:#1f2937;font-weight:400;letter-spacing:-0.1px;">Timeline &amp; Status</div>
<svg class="r" style="left:972.5px;top:743.6px" width="16" height="16" viewBox="0 0 16 16"><circle cx="8" cy="8" r="6.6" fill="none" stroke="#1a9c3e" stroke-width="1.4"/><path d="M5.2 8.2 L7.2 10.1 L10.9 6.3" fill="none" stroke="#1a9c3e" stroke-width="1.4" stroke-linecap="round" stroke-linejoin="round"/></svg>
<div class="r" style="left:980px;top:765px;width:1px;height:45px;background:#dfe1e6;"></div>
<div class="t " style="left:1007.4px;top:745.15px;font-size:14px;line-height:14px;color:#1f2937;font-weight:400;letter-spacing:-0.2px;">Work Order Created</div>
<div class="t " style="left:1007.4px;top:763.44px;font-size:12px;line-height:12px;color:#6b7280;font-weight:400;letter-spacing:0.05px;">June 15, 2025 - 08:30 AM</div>
<div class="t " style="left:1007.4px;top:782.44px;font-size:12px;line-height:12px;color:#4b5563;font-weight:400;letter-spacing:0.02px;">Created by Operations Manager</div>
<svg class="r" style="left:972.5px;top:827.5px" width="16" height="16" viewBox="0 0 16 16"><circle cx="8" cy="8" r="6.6" fill="none" stroke="#1a9c3e" stroke-width="1.4"/><path d="M5.2 8.2 L7.2 10.1 L10.9 6.3" fill="none" stroke="#1a9c3e" stroke-width="1.4" stroke-linecap="round" stroke-linejoin="round"/></svg>
<div class="t " style="left:1007.4px;top:829.15px;font-size:14px;line-height:14px;color:#1f2937;font-weight:400;letter-spacing:-0.04px;">Assigned to Technician</div>
</body></html>
